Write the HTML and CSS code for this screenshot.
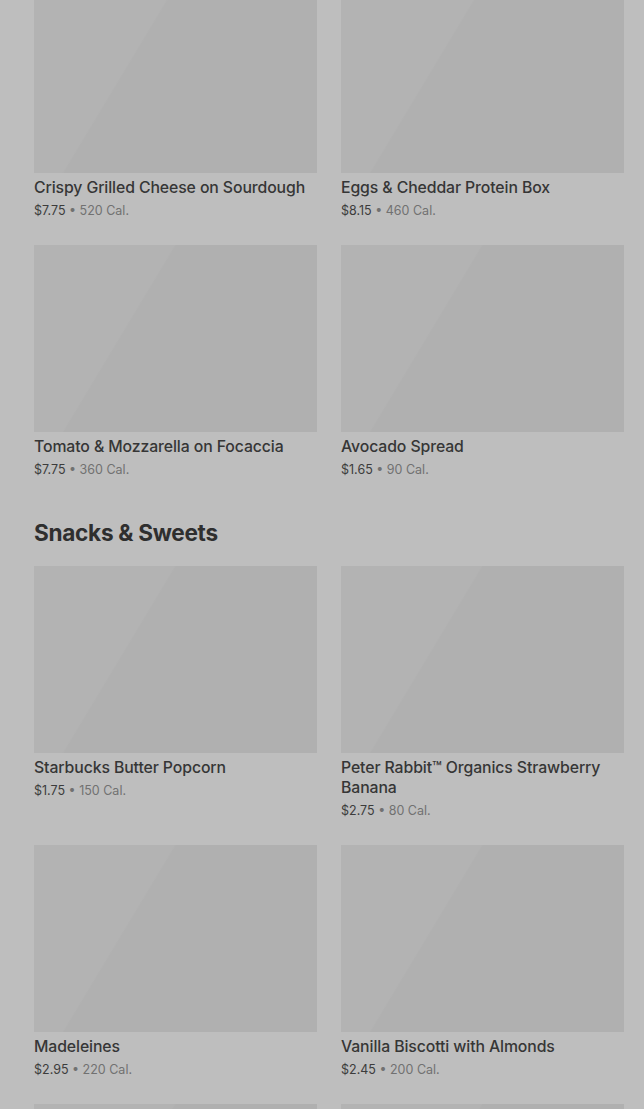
FILE: index.html
```html
<!DOCTYPE html>
<html lang="en">
<head>
    <meta charset="UTF-8">
    <meta name="viewport" content="width=device-width, initial-scale=1.0">
    <title>Menu</title>
    <link rel="stylesheet" href="styles.css">
</head>
<body>
    <div class="menu">
        <section class="section section-first">
            <div class="grid">
                <div class="item">
                    <div class="thumb"></div>
                    <div class="name">Crispy Grilled Cheese on Sourdough</div>
                    <div class="meta"><span class="price">$7.75</span> • 520 Cal.</div>
                </div>
                <div class="item">
                    <div class="thumb"></div>
                    <div class="name">Eggs &amp; Cheddar Protein Box</div>
                    <div class="meta"><span class="price">$8.15</span> • 460 Cal.</div>
                </div>
                <div class="item">
                    <div class="thumb"></div>
                    <div class="name">Tomato &amp; Mozzarella on Focaccia</div>
                    <div class="meta"><span class="price">$7.75</span> • 360 Cal.</div>
                </div>
                <div class="item">
                    <div class="thumb"></div>
                    <div class="name">Avocado Spread</div>
                    <div class="meta"><span class="price">$1.65</span> • 90 Cal.</div>
                </div>
            </div>
        </section>

        <section class="section">
            <h2>Snacks &amp; Sweets</h2>
            <div class="grid">
                <div class="item">
                    <div class="thumb"></div>
                    <div class="name">Starbucks Butter Popcorn</div>
                    <div class="meta"><span class="price">$1.75</span> • 150 Cal.</div>
                </div>
                <div class="item">
                    <div class="thumb"></div>
                    <div class="name">Peter Rabbit™ Organics Strawberry Banana</div>
                    <div class="meta"><span class="price">$2.75</span> • 80 Cal.</div>
                </div>
                <div class="item">
                    <div class="thumb"></div>
                    <div class="name">Madeleines</div>
                    <div class="meta"><span class="price">$2.95</span> • 220 Cal.</div>
                </div>
                <div class="item">
                    <div class="thumb"></div>
                    <div class="name">Vanilla Biscotti with Almonds</div>
                    <div class="meta"><span class="price">$2.45</span> • 200 Cal.</div>
                </div>
                <!-- next row still loading -->
                <div class="item">
                    <div class="thumb"></div>
                </div>
                <div class="item">
                    <div class="thumb"></div>
                </div>
            </div>
        </section>
    </div>
</body>
</html>
```

FILE: styles.css
```css
html, body {
    margin: 0;
    background-color: #bebebe;
    overflow: hidden;
}
body {
    font-family: Inter, "Noto Sans", sans-serif;
    color: #333;
}
.menu {
    padding: 0 20px 0 34px;
}
.section-first {
    margin-top: -14px;
}
.section h2 {
    margin: 37px 0 17px;
    font-size: 22.6px;
    line-height: 32px;
    font-weight: 700;
    letter-spacing: -0.3px;
    color: #2f2f2f;
}
.grid {
    display: grid;
    grid-template-columns: 1fr 1fr;
    column-gap: 24px;
    row-gap: 24px;
}
.thumb {
    height: 187px;
    background-color: #b0b0b0;
    background-image: linear-gradient(121deg, #b3b3b3 0%, #b3b3b3 35.5%, #b0b0b0 36%);
}
.name {
    margin-top: 5px;
    font-size: 15.8px;
    line-height: 20px;
    font-weight: 500;
    color: #363636;
    letter-spacing: -0.1px;
}
.meta {
    margin-top: 3px;
    font-size: 12.5px;
    line-height: 20px;
    color: #717171;
}
.price {
    color: #3c3c3c;
}
```
